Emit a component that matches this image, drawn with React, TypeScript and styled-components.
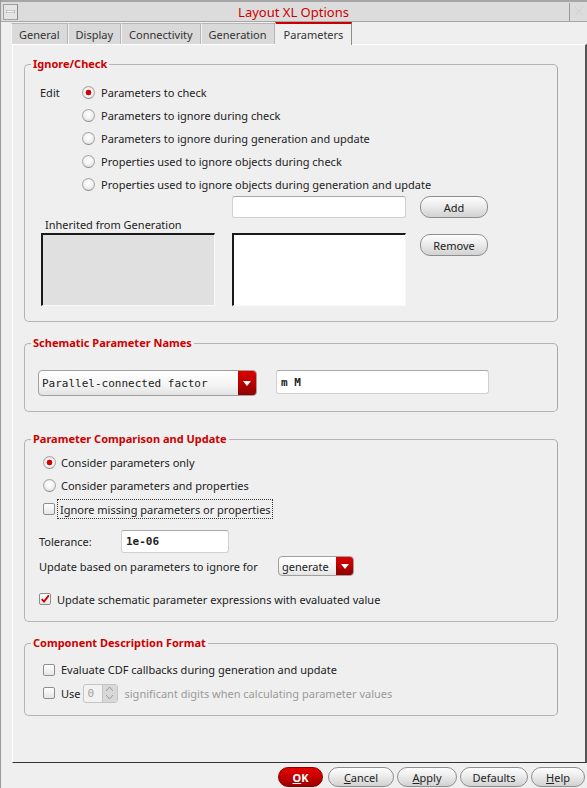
import React from "react";
import styled, { createGlobalStyle, css } from "styled-components";

const GlobalStyle = createGlobalStyle`
  html, body {
    margin: 0;
    padding: 0;
    background: #efefef;
  }
  body {
    font-family: "Noto Sans", "DejaVu Sans", sans-serif;
    font-size: 11px;
    color: #222;
  }
`;

const Window = styled.div`
  width: 587px;
  height: 788px;
  box-sizing: border-box;
  display: flex;
  flex-direction: column;
  background: #efefef;
  border-left: 1px solid #9a9a9a;
  overflow: hidden;
`;

const TitleBar = styled.div`
  height: 22px;
  box-sizing: border-box;
  display: flex;
  align-items: center;
  padding: 0 0 0 2px;
  background: #dcdcdc;
  border-top: 2px solid #a6a6a6;
  border-bottom: 1px solid #a6a6a6;
`;

const TitleButton = styled.div`
  width: 15px;
  height: 16px;
  box-sizing: border-box;
  display: flex;
  align-items: center;
  justify-content: center;
  background: #e4e4e4;
  border: 1px solid #a0a0a0;
  border-right-color: #888;
`;

const Title = styled.div`
  flex: 1;
  text-align: center;
  color: #cc0000;
  font-size: 13px;
  line-height: 18px;
  border-right: 1px solid #9a9a9a;
`;

const CloseBox = styled.div`
  width: 17px;
  height: 19px;
  display: flex;
  align-items: center;
  justify-content: center;
`;

const TabBar = styled.div`
  height: 22px;
  display: flex;
  align-items: flex-end;
  padding-left: 10px;
  position: relative;
  z-index: 1;
`;

const Tab = styled.div<{ $active?: boolean }>`
  height: 21px;
  box-sizing: border-box;
  padding: 0 7px;
  display: flex;
  align-items: center;
  background: #d9d9d9;
  border: 1px solid #b6b6b6;
  border-bottom: none;
  border-left-color: #f4f4f4;
  color: #333;
  ${(p) =>
    p.$active &&
    css`
      height: 23px;
      margin-bottom: -1px;
      background: #efefef;
      border-top: 2px solid #cc0000;
      border-left-color: #efefef;
      border-right-color: #8c8c8c;
      padding: 0 8px;
    `}
`;

const Panel = styled.div`
  flex: 1;
  margin-left: 11px;
  box-sizing: border-box;
  border-top: 1px solid #fff;
  border-left: 1px solid #fff;
  border-right: 2px solid #555;
  border-bottom: 1px solid #333;
  padding: 12px 27px 0 11px;
  display: flex;
  flex-direction: column;
`;

const Group = styled.fieldset<{ $mt?: number }>`
  margin: ${(p) => p.$mt ?? 0}px 0 0 0;
  padding: 0;
  min-width: 0;
  border: 1px solid #b4b4b4;
  border-right-color: #a6a6a6;
  border-radius: 5px;
`;

const Legend = styled.legend`
  margin-left: 6px;
  padding: 0 2px;
  color: #cc0000;
  font-weight: bold;
  font-size: 11px;
  line-height: 14px;
`;

const Body = styled.div<{ $pad: string }>`
  padding: ${(p) => p.$pad};
  display: flex;
  flex-direction: column;
`;

const EditRow = styled.div`
  display: flex;
`;

const EditLabel = styled.div`
  width: 42px;
  line-height: 23px;
`;

const RadioList = styled.div`
  display: flex;
  flex-direction: column;
`;

const OptionRow = styled.label<{ $h?: number; $indent?: number; $gap?: number; $muted?: boolean }>`
  height: ${(p) => p.$h ?? 23}px;
  display: flex;
  align-items: center;
  gap: ${(p) => p.$gap ?? 6}px;
  padding-left: ${(p) => p.$indent ?? 0}px;
  color: ${(p) => (p.$muted ? "#9a9a9a" : "#222")};
  white-space: nowrap;
`;

const RadioDot = styled.span<{ $on?: boolean }>`
  flex: none;
  width: 13px;
  height: 13px;
  box-sizing: border-box;
  border-radius: 50%;
  border: 1px solid #a8a8a8;
  border-bottom-color: #8a8a8a;
  background: ${(p) =>
    p.$on
      ? "radial-gradient(circle at 50% 50%, #d60000 0 2.6px, #ffffff 3.2px, #f2f2f2 55%, #cfcfcf 100%)"
      : "radial-gradient(circle at 50% 40%, #ffffff 0%, #f4f4f4 45%, #cdcdcd 100%)"};
`;

const CheckBox = styled.span`
  flex: none;
  width: 12px;
  height: 12px;
  box-sizing: border-box;
  border: 1px solid #8e8e8e;
  border-radius: 2px;
  background: linear-gradient(#ffffff, #e6e6e6);
  display: flex;
  align-items: center;
  justify-content: center;
`;

const Focus = styled.span`
  border: 1px dotted #333;
  padding: 2px 1px 1px 2px;
  margin-left: -4px;
`;

const ListArea = styled.div`
  display: flex;
  margin-left: 1px;
`;

const Column = styled.div<{ $w: number; $ml?: number; $end?: boolean }>`
  width: ${(p) => p.$w}px;
  margin-left: ${(p) => p.$ml ?? 0}px;
  display: flex;
  flex-direction: column;
  justify-content: ${(p) => (p.$end ? "flex-end" : "flex-start")};
`;

const ListBox = styled.div<{ $grey?: boolean }>`
  height: 73px;
  box-sizing: border-box;
  background: ${(p) => (p.$grey ? "#e0e0e0" : "#fff")};
  border-top: 2px solid #1a1a1a;
  border-left: 2px solid #1a1a1a;
  border-right: 1px solid #fafafa;
  border-bottom: 1px solid #fafafa;
`;

const Spacer = styled.div<{ $h: number }>`
  height: ${(p) => p.$h}px;
  flex: none;
`;

const SmallLabel = styled.div`
  margin: 0 0 1px 4px;
  line-height: 14px;
`;

const TextField = styled.div<{ $w?: number; $h?: number; $mono?: boolean; $top?: boolean }>`
  width: ${(p) => (p.$w ? `${p.$w}px` : "auto")};
  height: ${(p) => p.$h ?? 22}px;
  box-sizing: border-box;
  align-self: ${(p) => (p.$top ? "flex-start" : "auto")};
  background: #fff;
  border: 1px solid #d0d0d0;
  border-top-color: #a8a8a8;
  border-radius: 3px;
  display: flex;
  align-items: center;
  padding-left: 4px;
  font-family: ${(p) => (p.$mono ? '"DejaVu Sans Mono", monospace' : "inherit")};
  font-weight: ${(p) => (p.$mono ? "bold" : "normal")};
  font-size: 11px;
  color: #222;
`;

const Button = styled.button<{ $w: number; $h?: number; $primary?: boolean }>`
  width: ${(p) => p.$w}px;
  height: ${(p) => p.$h ?? 20}px;
  box-sizing: border-box;
  padding: 0;
  border-radius: 10px;
  border: 1px solid #8e8e8e;
  background: linear-gradient(#fdfdfd 0%, #ececec 45%, #d2d2d2 100%);
  font-family: "Noto Sans", "DejaVu Sans", sans-serif;
  font-size: 11px;
  color: #222;
  ${(p) =>
    p.$primary &&
    css`
      margin-right: 2px;
      background: linear-gradient(#e40000 0%, #c40000 50%, #9c0000 100%);
      border-color: #8a0000;
      color: #fff;
      font-weight: bold;
    `}
`;

const Combo = styled.div<{ $w: number; $h: number; $mono?: boolean }>`
  width: ${(p) => p.$w}px;
  height: ${(p) => p.$h}px;
  box-sizing: border-box;
  display: flex;
  border: 1px solid #a0a0a0;
  border-radius: 4px;
  overflow: hidden;
  background: linear-gradient(#ffffff, #f4f4f4 60%, #e2e2e2);
  font-family: ${(p) => (p.$mono ? '"DejaVu Sans Mono", monospace' : "inherit")};
  font-size: 11px;
`;

const ComboText = styled.div`
  flex: 1;
  display: flex;
  align-items: center;
  padding-left: 3px;
  white-space: nowrap;
`;

const ComboArrow = styled.div<{ $w: number }>`
  width: ${(p) => p.$w}px;
  display: flex;
  align-items: center;
  justify-content: center;
  background: linear-gradient(#dd0000, #b00000 60%, #8e0000);
`;

const FieldRow = styled.div<{ $mt?: number; $h?: number }>`
  display: flex;
  align-items: center;
  margin-top: ${(p) => p.$mt ?? 0}px;
  height: ${(p) => (p.$h ? `${p.$h}px` : "auto")};
`;

const FieldLabel = styled.div<{ $w: number }>`
  width: ${(p) => p.$w}px;
  flex: none;
`;

const Gap = styled.div<{ $w: number }>`
  width: ${(p) => p.$w}px;
  flex: none;
`;

const Spin = styled.div`
  width: 35px;
  height: 19px;
  box-sizing: border-box;
  display: flex;
  border: 1px solid #c4c4c4;
  border-radius: 3px;
  background: #f2f2f2;
  font-family: "DejaVu Sans Mono", monospace;
  font-size: 11px;
  color: #a0a0a0;
  margin: 0 1px 0 -4px;
`;

const SpinText = styled.div`
  flex: 1;
  display: flex;
  align-items: center;
  padding-left: 4px;
`;

const SpinArrows = styled.div`
  width: 14px;
  display: flex;
  flex-direction: column;
  align-items: center;
  justify-content: space-around;
  background: #d8d8d8;
  border-left: 1px solid #c4c4c4;
`;

const UseText = styled.span`
  color: #222;
`;

const Footer = styled.div`
  height: 25px;
  box-sizing: border-box;
  display: flex;
  align-items: flex-end;
  justify-content: flex-end;
  gap: 3px;
  padding: 0 2px 1px 0;
`;

const Arrow = () => (
  <svg width="8" height="5" viewBox="0 0 8 5">
    <path d="M0 0 H8 L4 5 Z" fill="#fff" />
  </svg>
);

const Check = () => (
  <svg width="12" height="12" viewBox="0 0 12 12">
    <path d="M2 6.2 L4.8 9.2 L10.6 1.6" stroke="#cc0000" strokeWidth="2.2" fill="none" />
  </svg>
);

const Radio = ({ on, label, indent, gap }: { on?: boolean; label: string; indent?: number; gap?: number }) => (
  <OptionRow $indent={indent} $gap={gap}>
    <RadioDot $on={on} />
    {label}
  </OptionRow>
);

export default function App() {
  return (
    <>
      <GlobalStyle />
      <Window>
        <TitleBar>
          <TitleButton>
            <svg width="9" height="3" viewBox="0 0 9 3">
              <rect x="0" y="0" width="9" height="3" fill="#f6f6f6" stroke="#9a9a9a" strokeWidth="1" />
            </svg>
          </TitleButton>
          <Title>Layout XL Options</Title>
          <CloseBox>
            <svg width="10" height="11" viewBox="0 0 10 11">
              <path d="M1 1 L9 10 M9 1 L1 10" stroke="#c8c8c8" strokeWidth="1" strokeDasharray="1 1" />
            </svg>
          </CloseBox>
        </TitleBar>

        <TabBar>
          <Tab>General</Tab>
          <Tab>Display</Tab>
          <Tab>Connectivity</Tab>
          <Tab>Generation</Tab>
          <Tab $active>Parameters</Tab>
        </TabBar>

        <Panel>
          <Group>
            <Legend>Ignore/Check</Legend>
            <Body $pad="10px 0 15px 15px">
              <EditRow>
                <EditLabel>Edit</EditLabel>
                <RadioList>
                  <Radio on label="Parameters to check" />
                  <Radio label="Parameters to ignore during check" />
                  <Radio label="Parameters to ignore during generation and update" />
                  <Radio label="Properties used to ignore objects during check" />
                  <Radio label="Properties used to ignore objects during generation and update" />
                </RadioList>
              </EditRow>
              <ListArea>
                <Column $w={174} $end>
                  <SmallLabel>Inherited from Generation</SmallLabel>
                  <ListBox $grey />
                </Column>
                <Column $w={174} $ml={17}>
                  <TextField $h={22} />
                  <Spacer $h={15} />
                  <ListBox />
                </Column>
                <Column $w={68} $ml={14}>
                  <Button $w={68} $h={22}>Add</Button>
                  <Spacer $h={16} />
                  <Button $w={68} $h={22}>Remove</Button>
                </Column>
              </ListArea>
            </Body>
          </Group>

          <Group $mt={14}>
            <Legend>Schematic Parameter Names</Legend>
            <Body $pad="20px 0 15px 13px">
              <FieldRow>
                <Combo $w={219} $h={26} $mono>
                  <ComboText>Parallel-connected factor</ComboText>
                  <ComboArrow $w={18}>
                    <Arrow />
                  </ComboArrow>
                </Combo>
                <Gap $w={19} />
                <TextField $w={213} $h={24} $mono $top>
                  m M
                </TextField>
              </FieldRow>
            </Body>
          </Group>

          <Group $mt={20}>
            <Legend>Parameter Comparison and Update</Legend>
            <Body $pad="5px 0 11px 14px">
              <Radio on indent={4} gap={5} label="Consider parameters only" />
              <Radio indent={4} gap={5} label="Consider parameters and properties" />
              <OptionRow $indent={4} $gap={6}>
                <CheckBox />
                <Focus>Ignore missing parameters or properties</Focus>
              </OptionRow>
              <FieldRow $mt={10} $h={22}>
                <FieldLabel $w={82}>Tolerance:</FieldLabel>
                <TextField $w={108} $h={23} $mono>
                  1e-06
                </TextField>
              </FieldRow>
              <FieldRow $mt={4} $h={20}>
                <FieldLabel $w={239}>Update based on parameters to ignore for</FieldLabel>
                <Combo $w={76} $h={20}>
                  <ComboText>generate</ComboText>
                  <ComboArrow $w={17}>
                    <Arrow />
                  </ComboArrow>
                </Combo>
              </FieldRow>
              <FieldRow $mt={12} $h={22}>
                <OptionRow $h={22} $gap={6}>
                  <CheckBox>
                    <Check />
                  </CheckBox>
                  Update schematic parameter expressions with evaluated value
                </OptionRow>
              </FieldRow>
            </Body>
          </Group>

          <Group $mt={14}>
            <Legend>Component Description Format</Legend>
            <Body $pad="8px 0 10px 18px">
              <OptionRow $h={23}>
                <CheckBox />
                Evaluate CDF callbacks during generation and update
              </OptionRow>
              <OptionRow $h={24} $muted>
                <CheckBox />
                <UseText>Use</UseText>
                <Spin>
                  <SpinText>0</SpinText>
                  <SpinArrows>
                    <svg width="7" height="4" viewBox="0 0 7 4">
                      <path d="M0 4 L3.5 0 L7 4" stroke="#9a9a9a" fill="none" />
                    </svg>
                    <svg width="7" height="4" viewBox="0 0 7 4">
                      <path d="M0 0 L3.5 4 L7 0" stroke="#9a9a9a" fill="none" />
                    </svg>
                  </SpinArrows>
                </Spin>
                significant digits when calculating parameter values
              </OptionRow>
            </Body>
          </Group>
        </Panel>

        <Footer>
          <Button $w={45} $primary>
            <u>O</u>K
          </Button>
          <Button $w={66}>
            <u>C</u>ancel
          </Button>
          <Button $w={60}>
            <u>A</u>pply
          </Button>
          <Button $w={68}>Defaults</Button>
          <Button $w={54}>
            <u>H</u>elp
          </Button>
        </Footer>
      </Window>
    </>
  );
}
